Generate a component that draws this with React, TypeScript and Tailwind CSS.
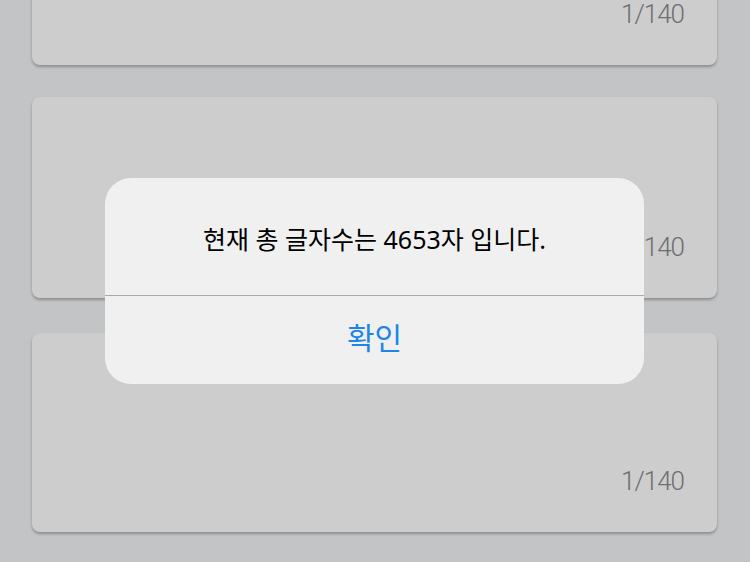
const cards = [
  { id: 1, count: "1/140", className: "-mt-[135px] h-[200px]" },
  { id: 2, count: "1/140", className: "mt-[32px] h-[201px]" },
  { id: 3, count: "1/140", className: "mt-[35px] h-[199px]" },
];

export default function App() {
  return (
    <div
      className="relative w-[750px] h-[562px] overflow-hidden bg-[#c3c4c6]"
      style={{ fontFamily: '"Noto Sans", "Noto Sans CJK KR", sans-serif' }}
    >
      <div className="flex flex-col px-[32px] pr-[33px]">
        {cards.map(({ id, count, className }) => (
          <div
            key={id}
            className={`flex flex-col justify-end items-end rounded-[8px] bg-[#cdcdcd] shadow-[0_2px_3px_rgba(0,0,0,0.28)] pr-[33px] pb-[36px] ${className}`}
          >
            <span className="font-['Roboto'] text-[26px] leading-[30px] font-light tracking-[-1px] text-[#6e6e72]">
              {count}
            </span>
          </div>
        ))}
      </div>

      <div className="absolute left-[105px] top-[178px] w-[539px] h-[206px] flex flex-col rounded-[26px] bg-[#f0f0f0] overflow-hidden">
        <div className="h-[118px] flex items-center justify-center border-b border-[#a9a9ab]">
          <p className="text-[25px] text-black pt-[6px]">
            현재 총 글자수는 4653자 입니다.
          </p>
        </div>
        <button className="flex-1 flex items-center justify-center text-[30px] text-[#1d85e6] pb-[6px]">
          확인
        </button>
      </div>
    </div>
  );
}
